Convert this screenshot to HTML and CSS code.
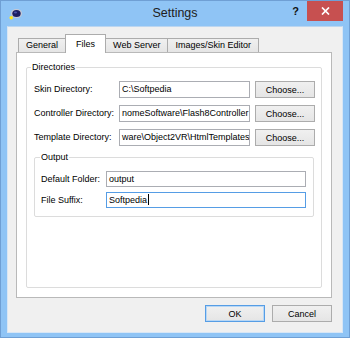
FILE: index.html
```html
<!DOCTYPE html>
<html>
<head>
<meta charset="utf-8">
<link rel="stylesheet" href="styles.css">
</head>
<body>
<div class="window">
  <div class="titlebar">
    <div class="tb-left">
      <svg class="app-icon" width="14" height="12" viewBox="0 0 14 12">
        <ellipse cx="7.5" cy="5.5" rx="5.5" ry="4.5" fill="#c9c9d3"/>
        <ellipse cx="7.5" cy="5.5" rx="4.2" ry="3.5" fill="#1b1f63"/>
        <ellipse cx="6.5" cy="4.5" rx="1.6" ry="1.1" fill="#4a52a8"/>
        <circle cx="2.2" cy="9.8" r="1.8" fill="#ffe81a"/>
      </svg>
    </div>
    <div class="title">Settings</div>
    <div class="tb-right">
      <span class="help">?</span>
      <div class="close">
        <svg width="9" height="8" viewBox="0 0 9 8"><path d="M1 0.5 L8 7.5 M8 0.5 L1 7.5" stroke="#fff" stroke-width="1.7"/></svg>
      </div>
    </div>
  </div>
  <div class="client">
    <div class="tabs">
      <div class="tab">General</div>
      <div class="tab active">Files</div>
      <div class="tab">Web Server</div>
      <div class="tab">Images/Skin Editor</div>
    </div>
    <div class="pane">
      <fieldset class="group dirs">
        <legend>Directories</legend>
        <div class="dir-grid">
          <label class="lbl">Skin Directory:</label>
          <div class="field">C:\Softpedia</div>
          <button class="btn choose">Choose...</button>
          <label class="lbl">Controller Directory:</label>
          <div class="field">nomeSoftware\Flash8Controller</div>
          <button class="btn choose">Choose...</button>
          <label class="lbl">Template Directory:</label>
          <div class="field">ware\Object2VR\HtmlTemplates</div>
          <button class="btn choose">Choose...</button>
        </div>
        <fieldset class="group output">
          <legend>Output</legend>
          <div class="out-grid">
            <label class="lbl">Default Folder:</label>
            <div class="field">output</div>
            <label class="lbl">File Suffix:</label>
            <div class="field focus">Softpedia<span class="caret"></span></div>
          </div>
        </fieldset>
      </fieldset>
    </div>
    <div class="buttons">
      <button class="btn dlg default">OK</button>
      <button class="btn dlg">Cancel</button>
    </div>
  </div>
</div>
</body>
</html>
```

FILE: styles.css
```css
* { box-sizing: border-box; }
html, body { margin: 0; padding: 0; background: #8cc2f3; }
body { font-family: "Liberation Sans", Arial, sans-serif; font-size: 9px; color: #000; }

.window {
  width: 350px;
  height: 338px;
  border: 1px solid #6f9fd4;
  background: #8fc4f5;
  padding: 0 6px 6px 6px;
  display: flex;
  flex-direction: column;
}

.titlebar {
  height: 25px;
  display: grid;
  grid-template-columns: 1fr auto 1fr;
  align-items: start;
  margin: 0 0 0 0;
}
.tb-left { padding: 7px 0 0 2px; }
.app-icon { display: block; }
.title {
  font-size: 12.5px;
  line-height: 25px;
  color: #202020;
}
.tb-right {
  display: flex;
  justify-content: flex-end;
  align-items: flex-start;
}
.help {
  font-weight: bold;
  font-size: 11px;
  line-height: 20px;
  margin-right: 8px;
  color: #111;
}
.close {
  width: 36px;
  height: 20px;
  background: #c75050;
  display: flex;
  align-items: center;
  justify-content: center;
}

.client {
  flex: 1;
  background: #f0f0f0;
  padding: 7px 10px 10px 8px;
  display: flex;
  flex-direction: column;
  border: 1px solid #d8e6f5;
  border-top-color: #bcd6f0;
}

.tabs {
  height: 18px;
  display: flex;
  align-items: flex-end;
  padding-left: 2px;
  position: relative;
  z-index: 1;
}
.tab {
  height: 14px;
  line-height: 13px;
  padding: 0 7px;
  border: 1px solid #acacac;
  border-bottom: none;
  background: linear-gradient(#f0f0f0, #e5e5e5);
  margin-left: -1px;
}
.tab:first-child { margin-left: 0; }
.tab.active {
  height: 19px;
  line-height: 18px;
  margin-bottom: -1px;
  background: #fff;
  padding: 0 10px;
  position: relative;
}

.pane {
  height: 246px;
  background: #fff;
  border: 1px solid #b9b9b9;
  padding: 8px 9px 9px 9px;
  display: flex;
  flex-direction: column;
}

.group {
  margin: 0;
  border: 1px solid #dcdcdc;
  border-radius: 2px;
  min-width: 0;
}
.group legend {
  line-height: 12px;
  padding: 0 1px;
}
.dirs {
  flex: 1;
  padding: 8px 7px 8px 7px;
}
.dirs > legend { margin-left: -3px; }

.dir-grid {
  display: grid;
  grid-template-columns: 85px 131px 60px;
  grid-auto-rows: 17px;
  row-gap: 7px;
  align-items: center;
}
.lbl { line-height: 17px; white-space: nowrap; }

.field {
  height: 17px;
  line-height: 15px;
  border: 1px solid #abadb3;
  background: #fff;
  padding: 0 2px;
  white-space: nowrap;
  overflow: hidden;
}
.field.focus { border-color: #569de5; }
.caret {
  display: inline-block;
  width: 1px;
  height: 11px;
  background: #000;
  vertical-align: -2px;
  margin-left: 1px;
}

.btn {
  font-family: inherit;
  font-size: 9px;
  color: #000;
  height: 17px;
  padding: 0;
  border: 1px solid #acacac;
  background: linear-gradient(#f0f0f0, #e5e5e5);
  border-radius: 0;
}
.choose { width: 60px; margin-left: 5px; }

.output {
  margin-top: 5px;
  padding: 8px 7px 8px 6px;
}
.output > legend { margin-left: -1px; }
.out-grid {
  display: grid;
  grid-template-columns: 65px 1fr;
  grid-auto-rows: 16px;
  row-gap: 5px;
  align-items: center;
}
.out-grid .field { height: 16px; line-height: 14px; }
.out-grid .lbl { line-height: 16px; }

.buttons {
  margin-top: 7px;
  display: flex;
  justify-content: flex-end;
  gap: 7px;
}
.dlg { width: 60px; }
.default { border-color: #569de5; box-shadow: inset 0 0 0 1px #b8d7f5; }
```
